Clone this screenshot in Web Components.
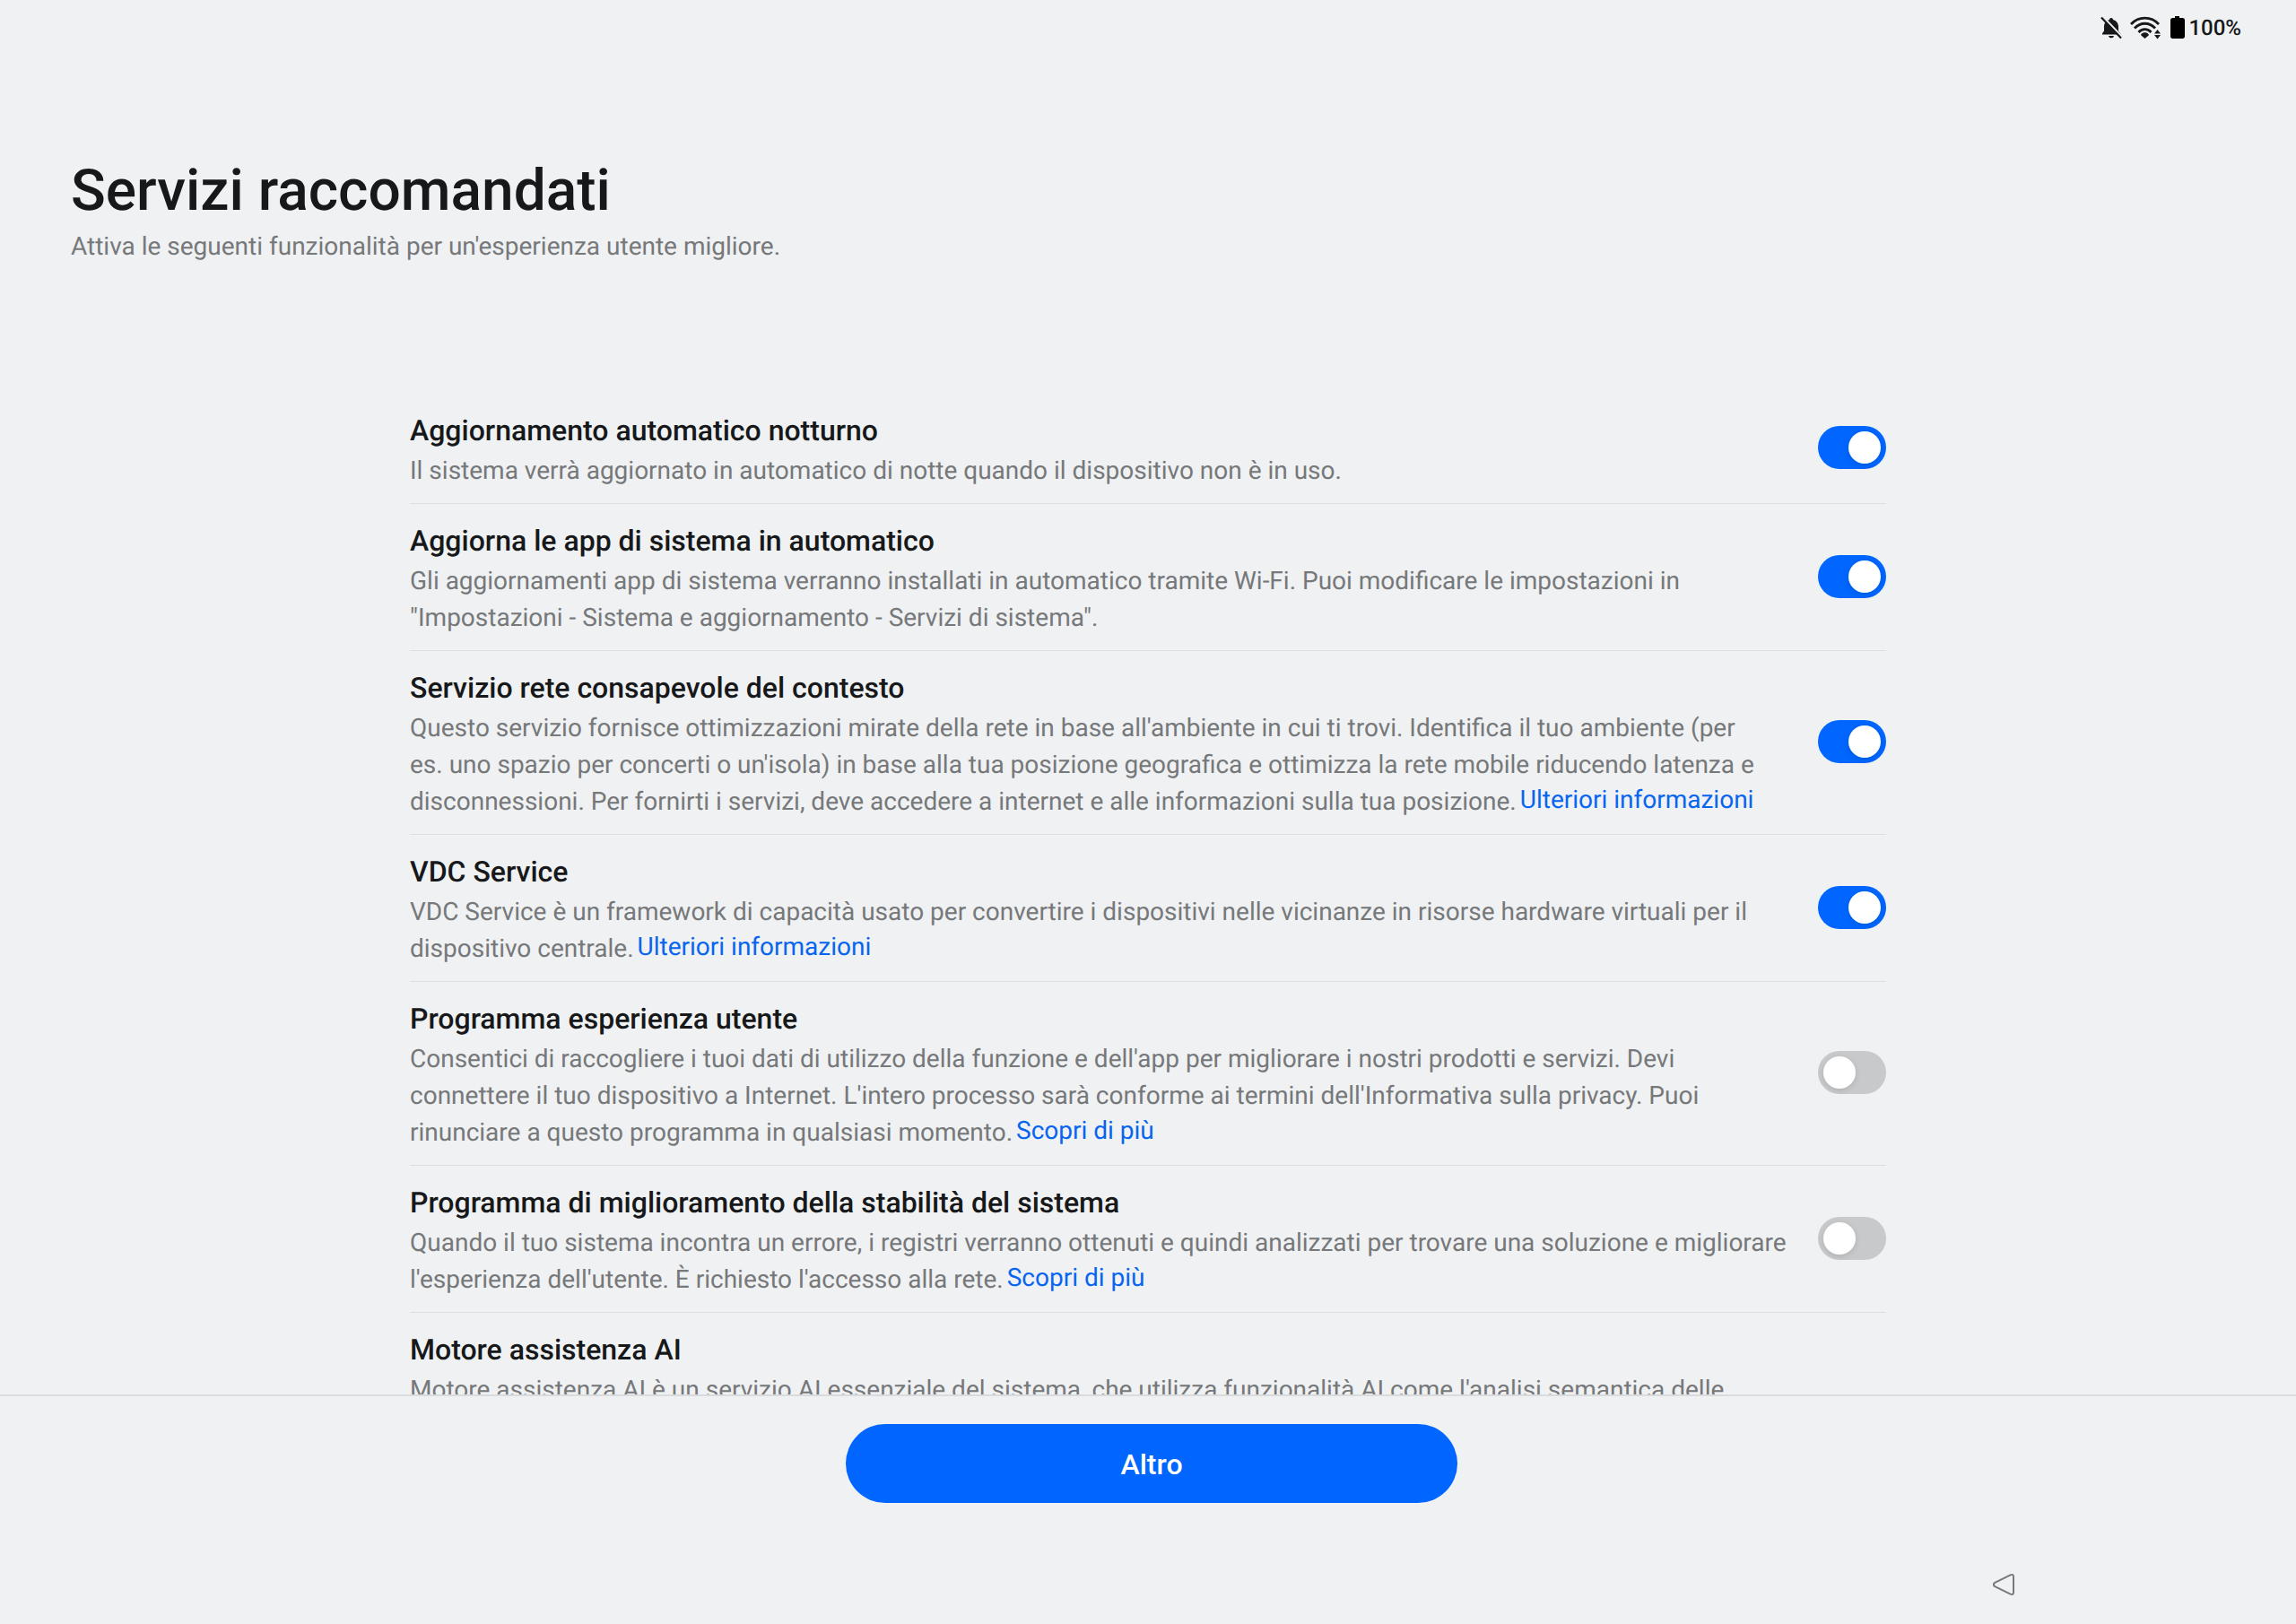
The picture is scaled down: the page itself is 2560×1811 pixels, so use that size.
<!DOCTYPE html>
<html lang="it">
<head>
<meta charset="utf-8">
<meta name="viewport" content="width=device-width, initial-scale=1">
<title>Servizi raccomandati</title>
<style>
    body {
        margin: 0;
        background-color: #eff1f3;
        color: #17181a;
        font-family: Roboto, 'Liberation Sans', sans-serif;
        text-rendering: geometricPrecision;
    }
</style>
</head>
<body>
<setup-page>
    <status-bar slot="status" level="100%"></status-bar>
    <page-header slot="header" heading="Servizi raccomandati">Attiva le seguenti funzionalità per un'esperienza utente migliore.</page-header>

    <service-row heading="Aggiornamento automatico notturno" checked>Il sistema verrà aggiornato in automatico di notte quando il dispositivo non è in uso.</service-row>
    <service-row heading="Aggiorna le app di sistema in automatico" checked>Gli aggiornamenti app di sistema verranno installati in automatico tramite Wi-Fi. Puoi modificare le impostazioni in "Impostazioni - Sistema e aggiornamento - Servizi di sistema".</service-row>
    <service-row heading="Servizio rete consapevole del contesto" checked>Questo servizio fornisce ottimizzazioni mirate della rete in base all'ambiente in cui ti trovi. Identifica il tuo ambiente (per es.&nbsp;uno spazio per concerti o un'isola) in base alla tua posizione geografica e ottimizza la rete mobile riducendo latenza e disconnessioni. Per fornirti i servizi, deve accedere a internet e alle informazioni sulla tua posizione.<a href="#rete">Ulteriori informazioni</a></service-row>
    <service-row heading="VDC Service" checked>VDC Service è un framework di capacità usato per convertire i dispositivi nelle vicinanze in risorse hardware virtuali per il dispositivo centrale.<a href="#vdc">Ulteriori informazioni</a></service-row>
    <service-row heading="Programma esperienza utente">Consentici di raccogliere i tuoi dati di utilizzo della funzione e dell'app per migliorare i nostri prodotti e servizi. Devi connettere il tuo dispositivo a Internet. L'intero processo sarà conforme ai termini dell'Informativa sulla privacy. Puoi rinunciare a questo programma in qualsiasi momento.<a href="#esperienza">Scopri di più</a></service-row>
    <service-row heading="Programma di miglioramento della stabilità del sistema">Quando il tuo sistema incontra un errore, i registri verranno ottenuti e quindi analizzati per trovare una soluzione e migliorare l'esperienza dell'utente. È richiesto l'accesso alla rete.<a href="#stabilita">Scopri di più</a></service-row>
    <service-row heading="Motore assistenza AI" lines="5">Motore assistenza AI è un servizio AI essenziale del sistema, che utilizza funzionalità AI come l'analisi semantica delle</service-row>

    <action-bar slot="footer">Altro</action-bar>
    <nav-bar slot="footer"></nav-bar>
</setup-page>

<script>
class SetupPage extends HTMLElement {
    constructor() {
        super();
        this.attachShadow({mode: 'open'});
    }

    connectedCallback() {
        this.shadowRoot.innerHTML = `
            <style>
            :host {
                display: flex;
                flex-direction: column;
                height: 100vh;
            }

            main {
                flex: 1;
                min-height: 0;
                overflow: hidden;
            }

            .list {
                width: min(1646px, 90%);
                margin: 0 auto;
            }

            footer {
                border-top: 2px solid #d9dbdd;
            }
            </style>
            <slot name="status"></slot>
            <slot name="header"></slot>
            <main><div class="list"><slot></slot></div></main>
            <footer><slot name="footer"></slot></footer>
        `;
    }
}
customElements.define('setup-page', SetupPage);

class StatusBar extends HTMLElement {
    constructor() {
        super();
        this.attachShadow({mode: 'open'});
    }

    connectedCallback() {
        const level = this.getAttribute('level') || '100%';

        this.shadowRoot.innerHTML = `
            <style>
            :host {
                display: flex;
                align-items: center;
                justify-content: flex-end;
                height: 62px;
                padding: 0 61px;
            }

            svg {
                display: block;
                margin-right: 9px;
            }

            .battery {
                margin-right: 3px;
            }

            span {
                font-size: 24px;
                font-weight: 500;
                line-height: 28px;
            }
            </style>
            <svg width="24" height="26" viewBox="0 0 24 26" aria-hidden="true">
                <path d="M12 2c1.200 0 2 .8 2 1.900 3.500.9 6 3.900 6 7.600v5l3 4H2v-1.200l2-2.800v-5c0-3.700 2.500-6.700 6-7.600C10 2.800 10.800 2 12 2z" fill="#17181a"/>
                <path d="M9 22h6c-.4 1.500-1.500 2.300-3 2.300S9.400 23.500 9 22z" fill="#17181a"/>
                <path d="M2 0l22 23" stroke="#eff1f3" stroke-width="2.500"/>
                <path d="M1 1.500l22 23" stroke="#17181a" stroke-width="2.200"/>
            </svg>
            <svg width="35" height="26" viewBox="0 0 35 26" aria-hidden="true">
                <g fill="none" stroke="#17181a" stroke-width="2.800">
                    <path d="M1 9C9.500-.2 23.500-.2 32 9"/>
                    <path d="M5 13.500c6.500-7 16.500-7 23 0"/>
                    <path d="M9.500 18c4-4.400 10-4.400 14 0"/>
                </g>
                <path d="M12.300 20c2.500-2.200 5.900-2.200 8.400 0v1.500L16.500 25l-4.200-3.500z" fill="#17181a"/>
                <path d="M30.500 15l3.500 4.500h-7zM30.500 25.500L27 21h7z" fill="#17181a"/>
            </svg>
            <svg class="battery" width="18" height="26" viewBox="0 0 18 26" aria-hidden="true">
                <path d="M6 0h5v2h3.500c1.500 0 2.500 1 2.500 2.500v18c0 1.500-1 2.500-2.500 2.500h-11C2 25 1 24 1 22.500v-18C1 3 2 2 3.500 2H6z" fill="#000"/>
            </svg>
            <span>${level}</span>
        `;
    }
}
customElements.define('status-bar', StatusBar);

class PageHeader extends HTMLElement {
    constructor() {
        super();
        this.attachShadow({mode: 'open'});
    }

    connectedCallback() {
        const heading = this.getAttribute('heading') || '';

        this.shadowRoot.innerHTML = `
            <style>
            :host {
                display: block;
                padding: 113px 79px 144px;
            }

            h1 {
                margin: 0 0 3px;
                font-size: 64px;
                font-weight: 500;
                line-height: 76px;
            }

            p {
                margin: 0;
                font-size: 28px;
                line-height: 41px;
                color: #76787a;
            }
            </style>
            <h1>${heading}</h1>
            <p><slot></slot></p>
        `;
    }
}
customElements.define('page-header', PageHeader);

class ServiceRow extends HTMLElement {
    constructor() {
        super();
        this.attachShadow({mode: 'open'});
    }

    connectedCallback() {
        const heading = this.getAttribute('heading') || '';
        const checked = this.hasAttribute('checked') ? 'checked' : '';
        const lines = this.getAttribute('lines') || 1;

        this.shadowRoot.innerHTML = `
            <style>
            :host {
                display: flex;
                align-items: center;
                gap: 32px;
                padding-bottom: 2px;
                border-bottom: 1px solid #dcdee0;
            }

            .text {
                flex: 1;
                padding: 21px 0 14px;
            }

            h2 {
                margin: 0 0 3px;
                font-size: 32px;
                font-weight: 500;
                line-height: 41px;
            }

            p {
                margin: 0;
                min-height: ${lines * 41}px;
                font-size: 28px;
                line-height: 41px;
                color: #76787a;
            }

            ::slotted(a) {
                display: inline-block;
                margin-left: 4px;
                line-height: 33px;
                vertical-align: 2px;
                color: #0865ef;
                text-decoration: none;
            }

            input {
                appearance: none;
                flex: none;
                box-sizing: border-box;
                display: flex;
                width: 76px;
                height: 48px;
                margin: 0;
                padding: 6px;
                border-radius: 24px;
                background-color: #c8c9cb;
                cursor: pointer;
            }

            input::before {
                content: '';
                width: 36px;
                height: 36px;
                border-radius: 50%;
                background-color: white;
                box-shadow: 0 2px 6px rgba(0,0,0,0.12);
            }

            input:checked {
                justify-content: flex-end;
                background-color: #0066ff;
            }
            </style>
            <div class="text">
                <h2><label for="toggle">${heading}</label></h2>
                <p><slot></slot></p>
            </div>
            <input type="checkbox" role="switch" id="toggle" ${checked}>
        `;
    }
}
customElements.define('service-row', ServiceRow);

class ActionBar extends HTMLElement {
    constructor() {
        super();
        this.attachShadow({mode: 'open'});
    }

    connectedCallback() {
        this.shadowRoot.innerHTML = `
            <style>
            :host {
                display: flex;
                justify-content: center;
                padding: 31px 0 0 8px;
            }

            button {
                width: min(682px, 80%);
                height: 88px;
                padding: 2px 0 0;
                border: none;
                border-radius: 44px;
                background-color: #0066ff;
                color: white;
                font-family: inherit;
                font-size: 32px;
                font-weight: 500;
                cursor: pointer;
            }
            </style>
            <button type="button"><slot></slot></button>
        `;
    }
}
customElements.define('action-bar', ActionBar);

class NavBar extends HTMLElement {
    constructor() {
        super();
        this.attachShadow({mode: 'open'});
    }

    connectedCallback() {
        this.shadowRoot.innerHTML = `
            <style>
            :host {
                display: flex;
                align-items: center;
                justify-content: flex-end;
                height: 88px;
                padding: 47px 290px 0;
            }

            button {
                display: grid;
                place-items: center;
                width: 72px;
                height: 72px;
                padding: 0;
                border: none;
                background: none;
                cursor: pointer;
            }
            </style>
            <button type="button" aria-label="Indietro">
                <svg width="24" height="24" viewBox="0 0 24 24" aria-hidden="true">
                    <path d="M1.800 10.200Q0 12 1.800 13.800L19.500 22.600Q23 23.800 23 21V3Q23 .2 19.500 1.400z" fill="none" stroke="#77797b" stroke-width="2" stroke-linejoin="round"/>
                </svg>
            </button>
        `;
    }
}
customElements.define('nav-bar', NavBar);
</script>
</body>
</html>
